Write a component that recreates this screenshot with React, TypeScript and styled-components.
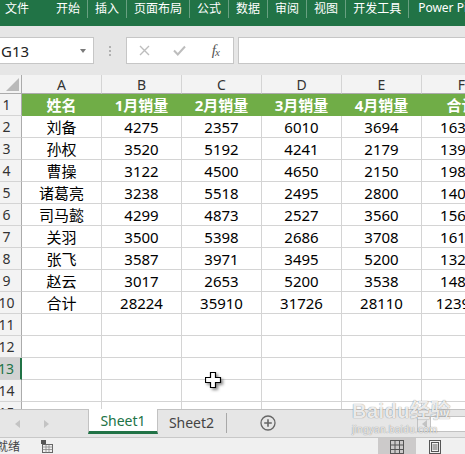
import React from "react";
import styled, { createGlobalStyle } from "styled-components";

const GlobalStyle = createGlobalStyle`
  html, body { margin: 0; padding: 0; background: #fff; }
  body { font-family: "Noto Sans", "Noto Sans CJK SC", sans-serif; }
  * { box-sizing: border-box; }
`;

const GREEN = "#217346";
const CJK = `"Noto Sans", "Noto Sans CJK SC", sans-serif`;

const Viewport = styled.div`
  width: 465px;
  height: 454px;
  overflow: hidden;
  position: relative;
`;

const Window = styled.div`
  margin-left: -8px;
  width: 473px;
  height: 454px;
  display: flex;
  flex-direction: column;
`;

const Ribbon = styled.div`
  height: 26px;
  flex: none;
  background: ${GREEN};
  display: flex;
  align-items: flex-start;
  color: #fff;
  font-family: "Noto Sans CJK SC", sans-serif;
  font-size: 12px;
  white-space: nowrap;
`;

const FileTab = styled.div`
  height: 18px;
  line-height: 16px;
  padding-left: 13px;
  margin-right: 20px;
`;

const RibbonTab = styled.div`
  height: 18px;
  line-height: 16px;
  padding: 0 7px;
  border-right: 1px solid rgba(255, 255, 255, 0.32);
  &:last-child { border-right: none; padding-left: 9px; font-family: ${CJK}; }
`;

const FormulaBar = styled.div`
  height: 49px;
  flex: none;
  background: #e6e6e6;
  display: flex;
  align-items: flex-start;
  padding-top: 11px;
`;

const NameBox = styled.div`
  width: 102px;
  height: 27px;
  background: #fff;
  border: 1px solid #c6c6c6;
  display: flex;
  align-items: center;
  justify-content: space-between;
  padding: 0 7px 0 8px;
  font-size: 15px;
  color: #222;
`;

const Caret = styled.span`
  width: 0;
  height: 0;
  border-left: 3px solid transparent;
  border-right: 3px solid transparent;
  border-top: 4px solid #7a7a7a;
`;

const DotsSlot = styled.div`
  width: 32px;
  height: 27px;
  display: flex;
  flex-direction: column;
  align-items: center;
  justify-content: center;
  gap: 2px;
`;

const Dot = styled.span`
  width: 2px;
  height: 2px;
  background: #b0b0b0;
`;

const FxBox = styled.div`
  width: 108px;
  height: 27px;
  background: #fff;
  border: 1px solid #c6c6c6;
  display: flex;
  margin-right: 4px;
`;

const FxSlot = styled.div`
  width: 36px;
  display: flex;
  align-items: center;
  justify-content: center;
`;

const FxLabel = styled.span`
  font-family: "Liberation Serif", serif;
  font-style: italic;
  font-size: 15px;
  color: #555;
  letter-spacing: -1px;
  & sub { font-size: 11px; vertical-align: -1px; }
`;

const FormulaInput = styled.div`
  flex: 1;
  height: 27px;
  background: #fff;
  border: 1px solid #c6c6c6;
  border-right: none;
`;

const Sheet = styled.div`
  height: 334px;
  flex: none;
  overflow: hidden;
  position: relative;
  background: #fff;
`;

const Grid = styled.div`
  display: grid;
  grid-template-columns: 30px repeat(6, 80px);
  grid-template-rows: 19px;
  grid-auto-rows: 22px;
  width: 510px;
`;

const Corner = styled.div`
  background: #f3f3f3;
  border-right: 1px solid #ababab;
  border-bottom: 1px solid #ababab;
  position: relative;
  &::after {
    content: "";
    position: absolute;
    right: 2px;
    bottom: 2px;
    width: 0;
    height: 0;
    border-left: 13px solid transparent;
    border-bottom: 13px solid #b9b9b9;
  }
`;

const ColHead = styled.div`
  background: #f3f3f3;
  border-right: 1px solid #d4d4d4;
  border-bottom: 1px solid #ababab;
  display: flex;
  align-items: center;
  justify-content: center;
  font-size: 14px;
  color: #333;
`;

const RowHead = styled.div<{ $selected?: boolean }>`
  background: ${(p) => (p.$selected ? "#d2d2d2" : "#f3f3f3")};
  border-right: ${(p) => (p.$selected ? `2px solid ${GREEN}` : "1px solid #ababab")};
  border-bottom: 1px solid #d4d4d4;
  display: flex;
  align-items: center;
  justify-content: center;
  font-size: 14px;
  color: ${(p) => (p.$selected ? GREEN : "#333")};
`;

const Cell = styled.div<{ $title?: boolean }>`
  background: ${(p) => (p.$title ? "#70ad47" : "#fff")};
  border-right: 1px solid ${(p) => (p.$title ? "#70ad47" : "#d4d4d4")};
  border-bottom: 1px solid ${(p) => (p.$title ? "#70ad47" : "#d4d4d4")};
  display: flex;
  align-items: center;
  justify-content: center;
  font-size: 15px;
  font-weight: ${(p) => (p.$title ? 700 : 400)};
  color: ${(p) => (p.$title ? "#fff" : "#000")};
  white-space: nowrap;
  overflow: visible;
`;

const Cursor = styled.svg`
  position: absolute;
  left: 213px;
  top: 297px;
  filter: drop-shadow(2px 2px 1.5px rgba(0, 0, 0, 0.45));
`;

const TabBar = styled.div`
  height: 28px;
  flex: none;
  background: #e6e6e6;
  border-top: 1px solid #c2c2c2;
  display: flex;
  align-items: flex-start;
`;

const NavArea = styled.div`
  width: 96px;
  height: 27px;
  display: flex;
  align-items: center;
  padding-left: 23px;
  gap: 24px;
`;

const Arrow = styled.span<{ $dir: "left" | "right" }>`
  width: 0;
  height: 0;
  border-top: 4px solid transparent;
  border-bottom: 4px solid transparent;
  ${(p) =>
    p.$dir === "left"
      ? "border-right: 5px solid #c3c3c3;"
      : "border-left: 5px solid #c3c3c3;"}
`;

const SheetTab = styled.div<{ $active?: boolean }>`
  width: ${(p) => (p.$active ? 70 : 68)}px;
  height: ${(p) => (p.$active ? 25 : 24)}px;
  margin-top: ${(p) => (p.$active ? -1 : 0)}px;
  display: flex;
  align-items: center;
  justify-content: center;
  font-size: 14px;
  background: ${(p) => (p.$active ? "#fff" : "transparent")};
  color: ${(p) => (p.$active ? GREEN : "#444")};
  border-left: ${(p) => (p.$active ? "1px solid #c2c2c2" : "none")};
  border-right: 1px solid ${(p) => (p.$active ? "#c2c2c2" : "transparent")};
  border-bottom: ${(p) => (p.$active ? `3px solid ${GREEN}` : "none")};
  padding-top: ${(p) => (p.$active ? 1 : 0)}px;
`;

const TabSep = styled.span`
  width: 1px;
  height: 20px;
  margin-top: 3px;
  background: #a8a8a8;
`;

const AddSheet = styled.svg`
  margin: 5px 0 0 33px;
  flex: none;
`;

const Spacer = styled.div`
  flex: 1;
`;

const HScroll = styled.div`
  width: 48px;
  height: 16px;
  margin-top: 6px;
  display: flex;
  border: 1px solid #c2c2c2;
  border-right: none;
  background: #fff;
`;

const ScrollBtn = styled.div`
  width: 13px;
  height: 100%;
  background: #e9e9e9;
  border-right: 1px solid #c2c2c2;
  display: flex;
  align-items: center;
  justify-content: center;
`;

const StatusBar = styled.div`
  height: 17px;
  flex: none;
  background: #f0f0f0;
  border-top: 1px solid #c8c8c8;
  display: flex;
  align-items: stretch;
  font-family: "Noto Sans CJK SC", sans-serif;
  font-size: 12px;
  color: #444;
`;

const StatusText = styled.div`
  padding-left: 4px;
  display: flex;
  align-items: center;
  line-height: 1;
`;

const MacroIcon = styled.svg`
  margin: 2px 0 0 20px;
`;

const ViewButtons = styled.div`
  margin-left: auto;
  display: flex;
  padding-right: 11px;
`;

const ViewBtn = styled.div<{ $active?: boolean }>`
  width: 38px;
  display: flex;
  align-items: center;
  justify-content: center;
  padding-top: 2px;
  background: ${(p) => (p.$active ? "#cccaca" : "transparent")};
`;

const Watermark = styled.div`
  position: absolute;
  left: 352px;
  top: 401px;
  display: flex;
  flex-direction: column;
  align-items: flex-start;
  color: rgba(255, 255, 255, 0.85);
  text-shadow: 0 0 1px rgba(0, 0, 0, 0.3), 0 0 1px rgba(0, 0, 0, 0.3);
  pointer-events: none;
  line-height: 1;
`;

const WmMain = styled.div`
  font-family: "Liberation Sans", "Noto Sans CJK SC", sans-serif;
  font-weight: 700;
  font-size: 20px;
  letter-spacing: 0.5px;
`;

const WmSub = styled.div`
  font-family: "Liberation Sans", sans-serif;
  font-size: 10px;
  margin-top: 4px;
  letter-spacing: 0.3px;
`;

const ribbonTabs = ["开始", "插入", "页面布局", "公式", "数据", "审阅", "视图", "开发工具", "Power Pivot"];

const titles = ["姓名", "1月销量", "2月销量", "3月销量", "4月销量", "合计"];
const data: (string | number)[][] = [
  ["刘备", 4275, 2357, 6010, 3694, 16336],
  ["孙权", 3520, 5192, 4241, 2179, 13932],
  ["曹操", 3122, 4500, 4650, 2150, 19815],
  ["诸葛亮", 3238, 5518, 2495, 2800, 14051],
  ["司马懿", 4299, 4873, 2527, 3560, 15629],
  ["关羽", 3500, 5398, 2686, 3708, 16192],
  ["张飞", 3587, 3971, 3495, 5200, 13253],
  ["赵云", 3017, 2653, 5200, 3538, 14808],
  ["合计", 28224, 35910, 31726, 28110, 123970],
];

const cols = ["A", "B", "C", "D", "E", "F"];

export default function App() {
  const rows: React.ReactNode[] = [];
  rows.push(<RowHead key="h1">1</RowHead>);
  titles.forEach((t, i) => rows.push(<Cell key={`t${i}`} $title>{t}</Cell>));
  data.forEach((r, ri) => {
    rows.push(<RowHead key={`h${ri + 2}`}>{ri + 2}</RowHead>);
    r.forEach((v, ci) => rows.push(<Cell key={`c${ri}-${ci}`}>{v}</Cell>));
  });
  for (let n = 11; n <= 15; n++) {
    rows.push(
      <RowHead key={`h${n}`} $selected={n === 13}>
        {n}
      </RowHead>
    );
    cols.forEach((c) => rows.push(<Cell key={`e${n}${c}`} />));
  }

  return (
    <Viewport>
      <GlobalStyle />
      <Window>
        <Ribbon>
          <FileTab>文件</FileTab>
          {ribbonTabs.map((t) => (
            <RibbonTab key={t}>{t}</RibbonTab>
          ))}
        </Ribbon>

        <FormulaBar>
          <NameBox>
            <span>G13</span>
            <Caret />
          </NameBox>
          <DotsSlot>
            <Dot />
            <Dot />
            <Dot />
          </DotsSlot>
          <FxBox>
            <FxSlot>
              <svg width="11" height="11" viewBox="0 0 11 11">
                <path d="M1 1L10 10M10 1L1 10" stroke="#bdbdbd" strokeWidth="1.4" fill="none" />
              </svg>
            </FxSlot>
            <FxSlot>
              <svg width="13" height="11" viewBox="0 0 13 11">
                <path d="M1 5.5L4.8 9.5L12 1.5" stroke="#bdbdbd" strokeWidth="2" fill="none" />
              </svg>
            </FxSlot>
            <FxSlot>
              <FxLabel>
                f<sub>x</sub>
              </FxLabel>
            </FxSlot>
          </FxBox>
          <FormulaInput />
        </FormulaBar>

        <Sheet>
          <Grid>
            <Corner />
            {cols.map((c) => (
              <ColHead key={c}>{c}</ColHead>
            ))}
            {rows}
          </Grid>
          <Cursor width="17" height="17" viewBox="0 0 17 17">
            <path
              d="M5.5 0.5H10.5V5.5H15.5V10.5H10.5V15.5H5.5V10.5H0.5V5.5H5.5Z"
              fill="#fff"
              stroke="#000"
              strokeWidth="1.2"
            />
          </Cursor>
        </Sheet>

        <TabBar>
          <NavArea>
            <Arrow $dir="left" />
            <Arrow $dir="right" />
          </NavArea>
          <SheetTab $active>Sheet1</SheetTab>
          <SheetTab>Sheet2</SheetTab>
          <TabSep />
          <AddSheet width="16" height="16" viewBox="0 0 16 16">
            <circle cx="8" cy="8" r="7" stroke="#666" strokeWidth="1.3" fill="none" />
            <path d="M8 4.2V11.8M4.2 8H11.8" stroke="#666" strokeWidth="1.6" />
          </AddSheet>
          <Spacer />
          <HScroll>
            <ScrollBtn>
              <Arrow $dir="left" />
            </ScrollBtn>
          </HScroll>
        </TabBar>

        <StatusBar>
          <StatusText>就绪</StatusText>
          <MacroIcon width="13" height="13" viewBox="0 0 13 13">
            <rect x="1" y="0" width="5" height="4" fill="#555" />
            <rect x="2.5" y="4.5" width="10" height="8" fill="none" stroke="#666" strokeWidth="1" />
            <path d="M2.5 7H12.5M2.5 9.5H12.5M6 4.5V12.5M9 4.5V12.5" stroke="#888" strokeWidth="0.8" />
          </MacroIcon>
          <ViewButtons>
            <ViewBtn $active>
              <svg width="14" height="14" viewBox="0 0 14 14">
                <rect x="0.5" y="0.5" width="13" height="13" fill="none" stroke="#555" />
                <path d="M0.5 5H13.5M0.5 9.5H13.5M5 0.5V13.5M9.5 0.5V13.5" stroke="#555" strokeWidth="1" />
              </svg>
            </ViewBtn>
            <ViewBtn>
              <svg width="12" height="14" viewBox="0 0 12 14">
                <rect x="0.5" y="0.5" width="11" height="13" fill="none" stroke="#555" />
                <rect x="2.5" y="2.5" width="7" height="9" fill="none" stroke="#555" />
                <path d="M3.5 5H8.5M3.5 7H8.5M3.5 9H8.5" stroke="#555" strokeWidth="0.9" />
              </svg>
            </ViewBtn>
          </ViewButtons>
        </StatusBar>
      </Window>
      <Watermark>
        <WmMain>Baidu经验</WmMain>
        <WmSub>jingyan.baidu.com</WmSub>
      </Watermark>
    </Viewport>
  );
}
